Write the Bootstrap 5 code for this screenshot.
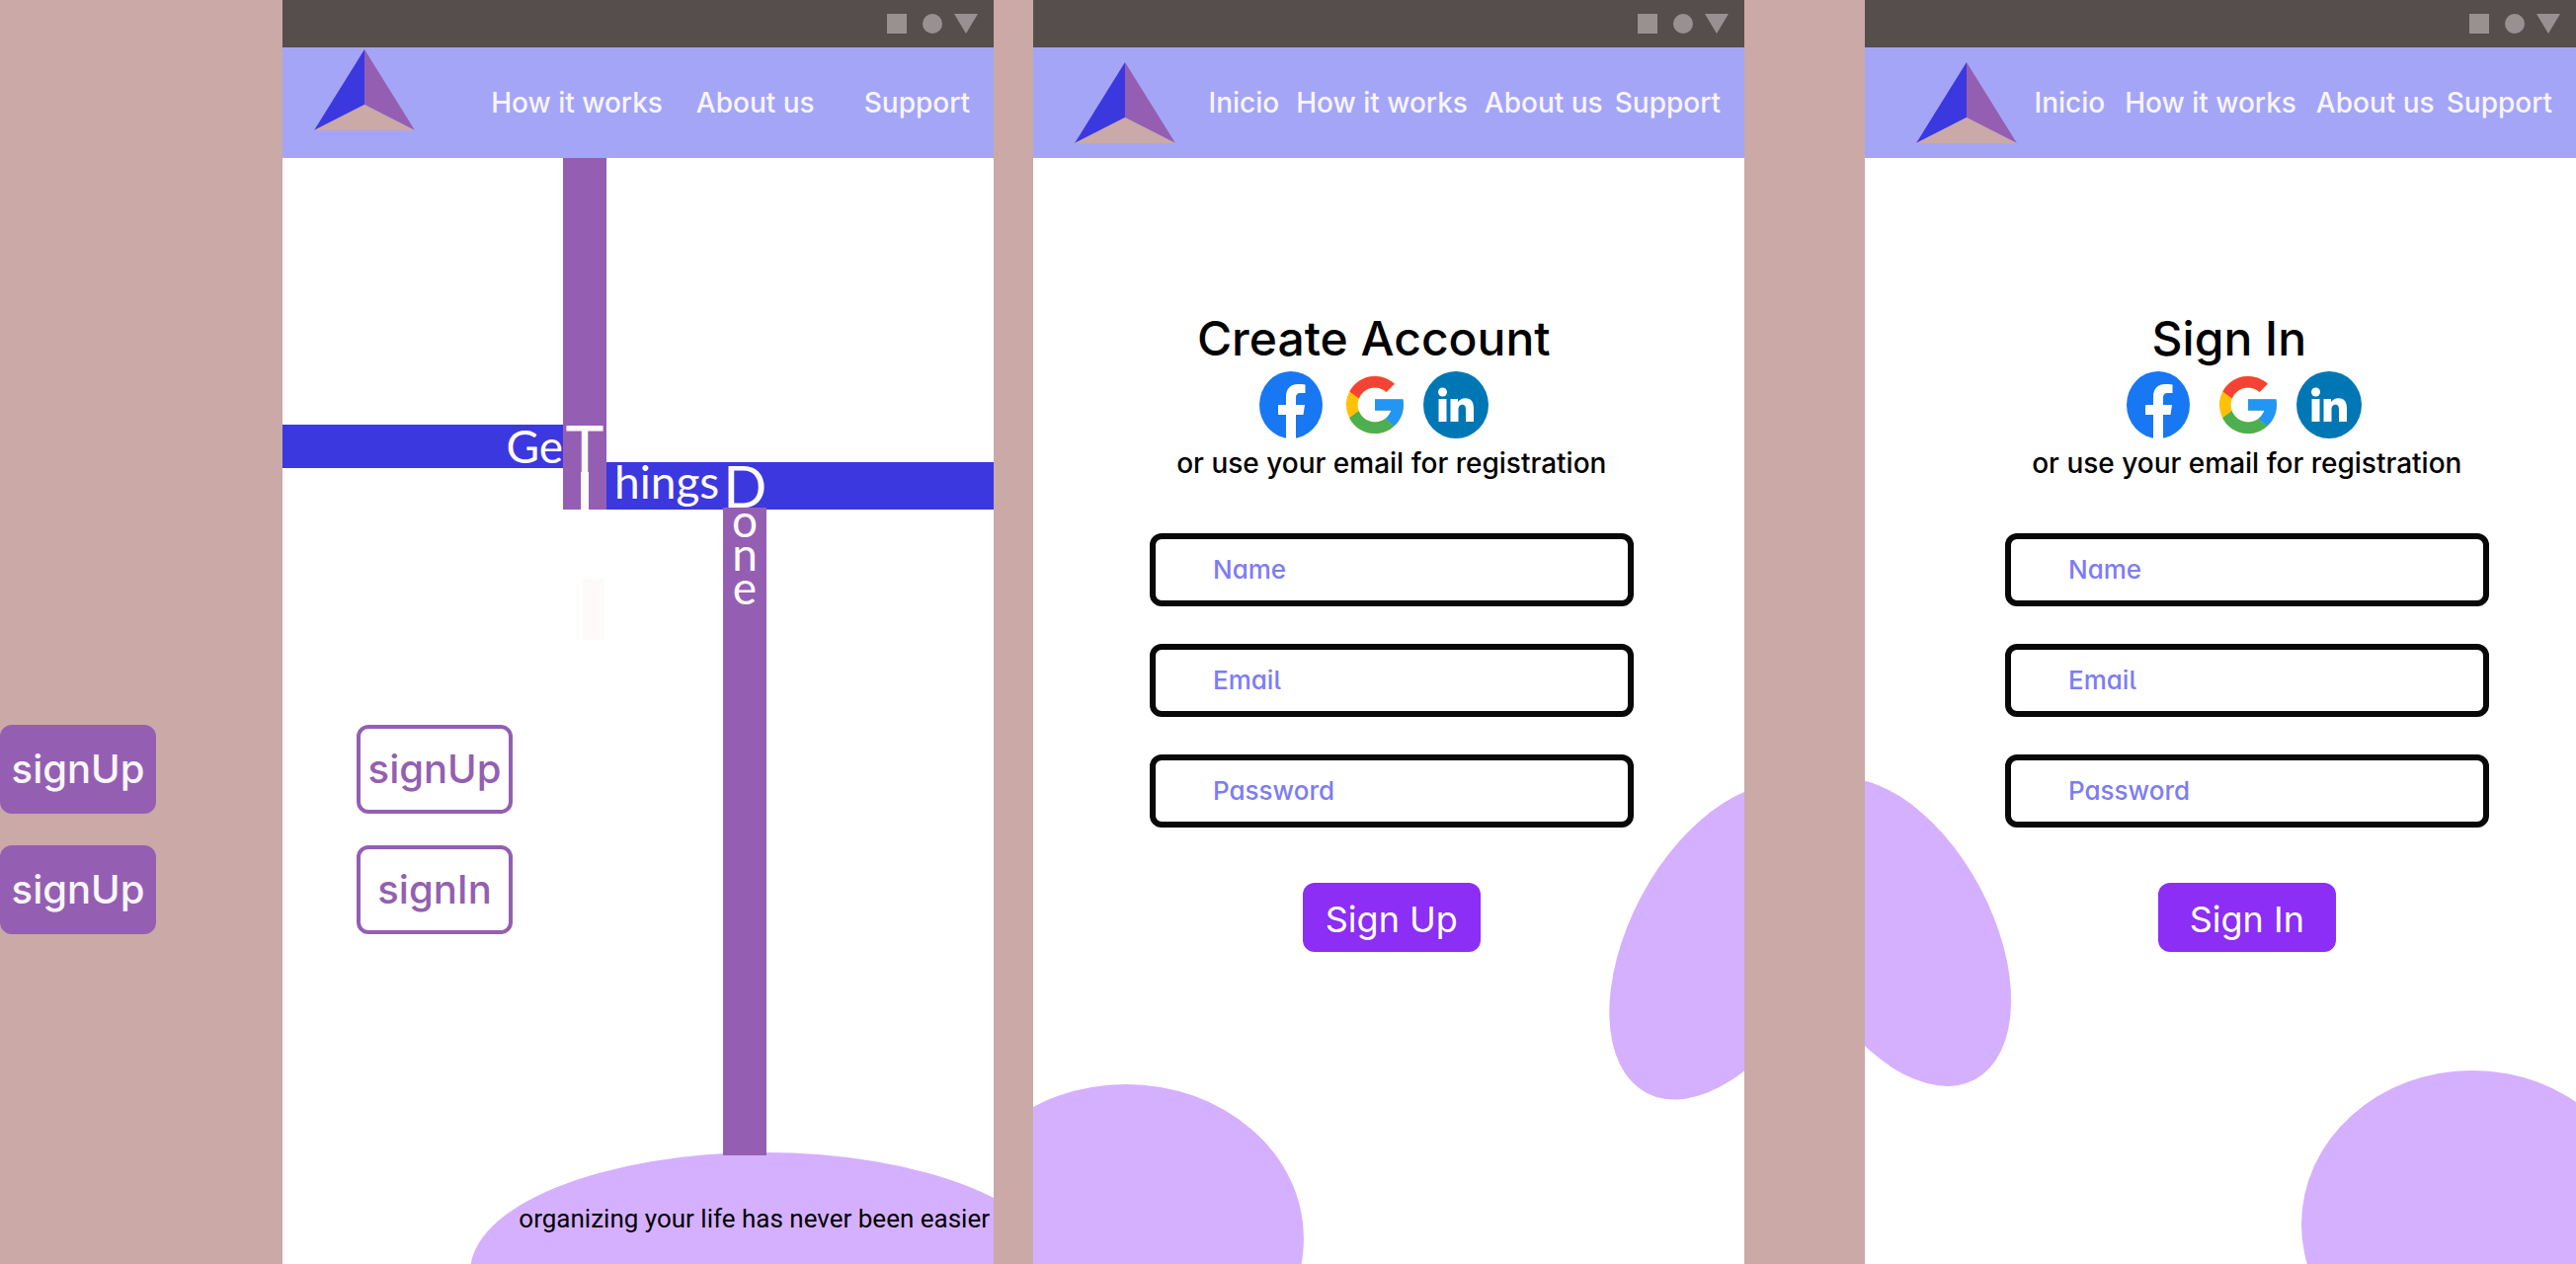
<!DOCTYPE html>
<html lang="en">
<head>
<meta charset="utf-8">
<meta name="viewport" content="width=device-width, initial-scale=1">
<title>Get Things Done</title>
<link rel="stylesheet" href="https://cdn.jsdelivr.net/npm/bootstrap@5.3.0/dist/css/bootstrap.min.css">
<style>
  :root {
    --plum: #945fb2;
    --royal: #3c38e0;
    --rose: #caa9a7;
    --lilac: #d5b0ff;
    --snow: #fffafa;
  }
  body { background: var(--rose); color: #000; font-family: Inter, "Liberation Sans", sans-serif; }

  /* screens */
  .side-rail { width: 286px; padding-top: 734px; }
  .phone { flex: 1 1 0; min-width: 0; background: #fff; z-index: 0; }
  .gap-narrow { width: 40px; }
  .gap-wide { width: 122px; }
  .status { height: 48px; background: #564d4d; padding-right: 16px; }
  .topnav { height: 112px; background: #a5a5f7; padding: 0 24px 0 42px; }
  .topnav a { color: #f7f5fd; font-size: 28px; line-height: 34px; font-weight: 500; text-decoration: none; white-space: nowrap; }
  .topnav a + a { margin-left: 17px; }
  .topnav a.last { margin-left: 12px; }
  .logo { width: 102px; height: 82px; }
  .topnav.home { padding-left: 32px; }
  .topnav.home .logo { margin-bottom: 26px; }
  .topnav.home a + a { margin-left: 34px; }
  .topnav.home a.last { margin-left: 50px; }
  .topnav.signin { padding-left: 52px; }
  .topnav.signin a + a { margin-left: 20px; }
  .topnav.signin a.last { margin-left: 12px; }

  /* call to action buttons */
  .cta { width: 158px; height: 90px; border: 4px solid var(--plum); border-radius: 12px; padding: 0;
         font-size: 40px; line-height: 48px; font-weight: 500; color: var(--plum); background: #fff; }
  .cta.solid { background: var(--plum); color: #f8f6fc; }
  .stack { gap: 32px; }

  /* crossed beams with the product name */
  .beams { display: grid; font-family: Lato, sans-serif; font-size: 46px; color: var(--snow);
           grid-template-columns: 284fr 44px 118px 44px 230fr;
           grid-template-rows: 270px 38px 6px 40px 2px minmax(654px, 1fr) 110px; }
  .beam-left { grid-area: 2 / 1 / 4 / 2; background: var(--royal); line-height: 44px; }
  .beam-top { grid-area: 1 / 2 / 6 / 3; background: var(--plum); }
  .beam-right { grid-area: 3 / 3 / 6 / 6; background: var(--royal); line-height: 40px; padding-left: 8px; }
  .beam-down { grid-area: 5 / 4 / 7 / 5; background: var(--plum); line-height: 26px; gap: 8px; }
  .big-t { font-size: 66px; line-height: 50px; margin-top: 268px; }
  .t-stem { width: 8px; flex: 1; background: var(--snow); }
  .big-d { font-size: 58px; line-height: 48px; }
  .ghost { grid-area: 6 / 2 / 7 / 3; width: 22px; height: 62px; margin: 70px 0 0 20px; background: var(--snow); }
  .hero-actions { grid-area: 6 / 1 / 7 / 3; padding: 218px 0 0 75px; font-family: Inter, sans-serif; }
  .tagline { grid-area: 7 / 1 / 8 / 6; padding: 48px 4px 0 0; color: #000;
             font-family: Roboto, sans-serif; font-size: 26px; line-height: 32px; }

  /* forms */
  .auth { width: 68%; padding-top: 154px; margin-left: 118px; }
  .signin-form { margin-left: 142px; }
  .auth h1 { font-size: 48px; line-height: 58px; font-weight: 500; margin: 0; padding-right: 36px; }
  .social { padding-right: 36px; height: 68px; margin-top: 4px; }
  .signin-form .social { padding-right: 6px; }
  .social a, .social svg { display: block; }
  .social .g-link { margin: 0 20px 0 24px; }
  .signin-form .social .g-link { margin-left: 30px; }
  .hint { font-size: 28px; line-height: 34px; font-weight: 500; margin: 8px 0 54px; white-space: nowrap; }
  .entry { margin-bottom: 38px; }
  .field { height: 74px; border: 6px solid #080808; border-radius: 12px; padding: 0 58px; font-size: 26px; }
  .field::placeholder { color: transparent; }
  .entry label { left: 64px; top: 20px; color: #7d7cf5; font-size: 26px; line-height: 34px; font-weight: 500;
                 font-feature-settings: "cv11", "cv05"; pointer-events: none; }
  .field:not(:placeholder-shown) + label { display: none; }
  .submit { width: 180px; height: 70px; margin-top: 18px; border: 0; border-radius: 12px; padding: 4px 0 0;
            background: #8c2ef5; color: #fff; font-size: 36px; line-height: 44px; font-feature-settings: "cv11"; }

  /* decorative blobs behind the content */
  .blob { position: absolute; background: var(--lilac); border-radius: 50%; z-index: -1; }
  .blob-hero { width: 594px; height: 242px; right: -64px; bottom: -129px; }
  .blob-round { width: 360px; height: 312px; left: -86px; bottom: -130px; }
  .blob-tilt { width: 196px; height: 346px; right: -80px; top: 781px; transform: rotate(28deg); }
  .blob-round.mirror { width: 346px; left: auto; right: -68px; bottom: -116px; }
  .blob-tilt.mirror { width: 192px; height: 338px; right: auto; left: -64px; top: 775px; transform: rotate(-28deg); }
</style>
</head>
<body>
<svg class="d-none" xmlns="http://www.w3.org/2000/svg">
  <symbol id="logo" viewBox="0 0 102 82">
    <path fill="#3c38e0" d="M51 0v56L0 82z"/>
    <path fill="#945fb2" d="M51 0v56l51 26z"/>
    <path fill="#caa9a7" d="M51 56l51 26H0z"/>
  </symbol>
  <symbol id="sysicons" viewBox="0 0 92 20">
    <path fill="#979291" d="M0 0h20v20H0zM68 0h24L80 20z"/>
    <circle fill="#979291" cx="46" cy="10" r="10"/>
  </symbol>
  <symbol id="facebook" viewBox="0 0 64 68">
    <ellipse cx="32" cy="34" rx="32" ry="34" fill="#1877f2"/>
    <path fill="#fff" d="M27 68V44h-8V34h8v-8c0-9 5-13 12-13 3 0 5 0 7.500.5V22H42c-4 0-5 2-5 5v7h9l-1.500 10H37v24q-5 .8-10 0z"/>
  </symbol>
  <symbol id="google" viewBox="4 4 40 40">
    <path fill="#ffc107" d="M43.600 20H24v8h11.300c-1.600 4.700-6.100 8-11.300 8-6.600 0-12-5.400-12-12s5.400-12 12-12c3.100 0 5.800 1.200 8 3l5.700-5.700C34 6.100 29.300 4 24 4 13 4 4 13 4 24s9 20 20 20 20-9 20-20c0-1.300-.1-2.700-.4-4z"/>
    <path fill="#f44336" d="M6.300 14.700l6.600 4.800C14.700 15.100 19 12 24 12c3.100 0 5.800 1.200 8 3l5.700-5.700C34 6.100 29.300 4 24 4 16.300 4 9.700 8.300 6.300 14.700z"/>
    <path fill="#4caf50" d="M24 44c5.200 0 9.900-2 13.400-5.200l-6.200-5.200C29.200 35.100 26.700 36 24 36c-5.200 0-9.600-3.300-11.300-7.900l-6.500 5C9.500 39.600 16.200 44 24 44z"/>
    <path fill="#2196f3" d="M43.600 20H24v8h11.300c-.8 2.200-2.200 4.200-4.100 5.600l6.200 5.200C37 39.200 44 34 44 24c0-1.300-.1-2.700-.4-4z"/>
  </symbol>
  <symbol id="linkedin" viewBox="0 0 66 68">
    <ellipse cx="33" cy="34" rx="33" ry="34" fill="#0077b5"/>
    <circle cx="19.500" cy="21" r="4.500" fill="#fff"/>
    <path fill="#fff" d="M15.500 28h8v23h-8zM27.500 28h7.500v3.200c1.200-2.300 4-4 7.500-4 6.500 0 8.500 4.300 8.500 10.300V51h-8V39c0-3-.5-5.300-3.500-5.300S35.500 36 35.500 39v12h-8z"/>
  </symbol>
</svg>

<div class="d-flex min-vh-100 overflow-hidden">
  <aside class="side-rail flex-shrink-0 d-flex flex-column stack">
    <button type="button" class="cta solid">signUp</button>
    <button type="button" class="cta solid">signUp</button>
  </aside>

  <!-- Home -->
  <section class="phone d-flex flex-column position-relative overflow-hidden">
    <div class="status d-flex align-items-center justify-content-end"><svg width="92" height="20" aria-hidden="true"><use href="#sysicons"/></svg></div>
    <nav class="topnav home d-flex align-items-center justify-content-between">
      <svg class="logo" role="img" aria-label="Logo"><use href="#logo"/></svg>
      <div class="d-flex">
        <a href="#how">How it works</a><a href="#about">About us</a><a href="#support" class="last">Support</a>
      </div>
    </nav>
    <main class="beams flex-grow-1">
      <div class="beam-left text-end">Ge</div>
      <div class="beam-top d-flex flex-column align-items-center"><span class="big-t">T</span><span class="t-stem"></span></div>
      <div class="beam-right d-flex"><span>hings</span><span class="big-d ms-1">D</span></div>
      <div class="beam-down d-flex flex-column align-items-center"><span>o</span><span>n</span><span>e</span></div>
      <div class="ghost"></div>
      <div class="hero-actions d-flex flex-column stack">
        <button type="button" class="cta">signUp</button>
        <button type="button" class="cta">signIn</button>
      </div>
      <p class="tagline text-end mb-0">organizing your life has never been easier</p>
    </main>
    <div class="blob blob-hero"></div>
  </section>

  <div class="gap-narrow flex-shrink-0"></div>

  <!-- Create account -->
  <section class="phone position-relative overflow-hidden">
    <div class="status d-flex align-items-center justify-content-end"><svg width="92" height="20" aria-hidden="true"><use href="#sysicons"/></svg></div>
    <nav class="topnav d-flex align-items-center justify-content-between">
      <svg class="logo" role="img" aria-label="Logo"><use href="#logo"/></svg>
      <div class="d-flex">
        <a href="#home">Inicio</a><a href="#how">How it works</a><a href="#about">About us</a><a href="#support" class="last">Support</a>
      </div>
    </nav>
    <form class="auth d-flex flex-column">
      <h1 class="text-center">Create Account</h1>
      <div class="social d-flex justify-content-center align-items-center">
        <a href="#facebook" aria-label="Facebook"><svg width="64" height="68"><use href="#facebook"/></svg></a>
        <a href="#google" aria-label="Google" class="g-link"><svg width="58" height="58"><use href="#google"/></svg></a>
        <a href="#linkedin" aria-label="LinkedIn"><svg width="66" height="68"><use href="#linkedin"/></svg></a>
      </div>
      <p class="hint text-center">or use your email for registration</p>
      <div class="entry position-relative">
        <input class="field form-control" id="up-name" type="text" placeholder=" ">
        <label class="position-absolute" for="up-name">Name</label>
      </div>
      <div class="entry position-relative">
        <input class="field form-control" id="up-email" type="email" placeholder=" ">
        <label class="position-absolute" for="up-email">Email</label>
      </div>
      <div class="entry position-relative">
        <input class="field form-control" id="up-pass" type="password" placeholder=" ">
        <label class="position-absolute" for="up-pass">Password</label>
      </div>
      <button type="submit" class="submit align-self-center">Sign Up</button>
    </form>
    <div class="blob blob-round"></div>
    <div class="blob blob-tilt"></div>
  </section>

  <div class="gap-wide flex-shrink-0"></div>

  <!-- Sign in -->
  <section class="phone position-relative overflow-hidden">
    <div class="status d-flex align-items-center justify-content-end"><svg width="92" height="20" aria-hidden="true"><use href="#sysicons"/></svg></div>
    <nav class="topnav signin d-flex align-items-center justify-content-between">
      <svg class="logo" role="img" aria-label="Logo"><use href="#logo"/></svg>
      <div class="d-flex">
        <a href="#home">Inicio</a><a href="#how">How it works</a><a href="#about">About us</a><a href="#support" class="last">Support</a>
      </div>
    </nav>
    <form class="auth signin-form d-flex flex-column">
      <h1 class="text-center">Sign In</h1>
      <div class="social d-flex justify-content-center align-items-center">
        <a href="#facebook" aria-label="Facebook"><svg width="64" height="68"><use href="#facebook"/></svg></a>
        <a href="#google" aria-label="Google" class="g-link"><svg width="58" height="58"><use href="#google"/></svg></a>
        <a href="#linkedin" aria-label="LinkedIn"><svg width="66" height="68"><use href="#linkedin"/></svg></a>
      </div>
      <p class="hint text-center">or use your email for registration</p>
      <div class="entry position-relative">
        <input class="field form-control" id="in-name" type="text" placeholder=" ">
        <label class="position-absolute" for="in-name">Name</label>
      </div>
      <div class="entry position-relative">
        <input class="field form-control" id="in-email" type="email" placeholder=" ">
        <label class="position-absolute" for="in-email">Email</label>
      </div>
      <div class="entry position-relative">
        <input class="field form-control" id="in-pass" type="password" placeholder=" ">
        <label class="position-absolute" for="in-pass">Password</label>
      </div>
      <button type="submit" class="submit align-self-center">Sign In</button>
    </form>
    <div class="blob blob-round mirror"></div>
    <div class="blob blob-tilt mirror"></div>
  </section>
</div>
<script src="https://cdn.jsdelivr.net/npm/bootstrap@5.3.0/dist/js/bootstrap.bundle.min.js"></script>
</body>
</html>
